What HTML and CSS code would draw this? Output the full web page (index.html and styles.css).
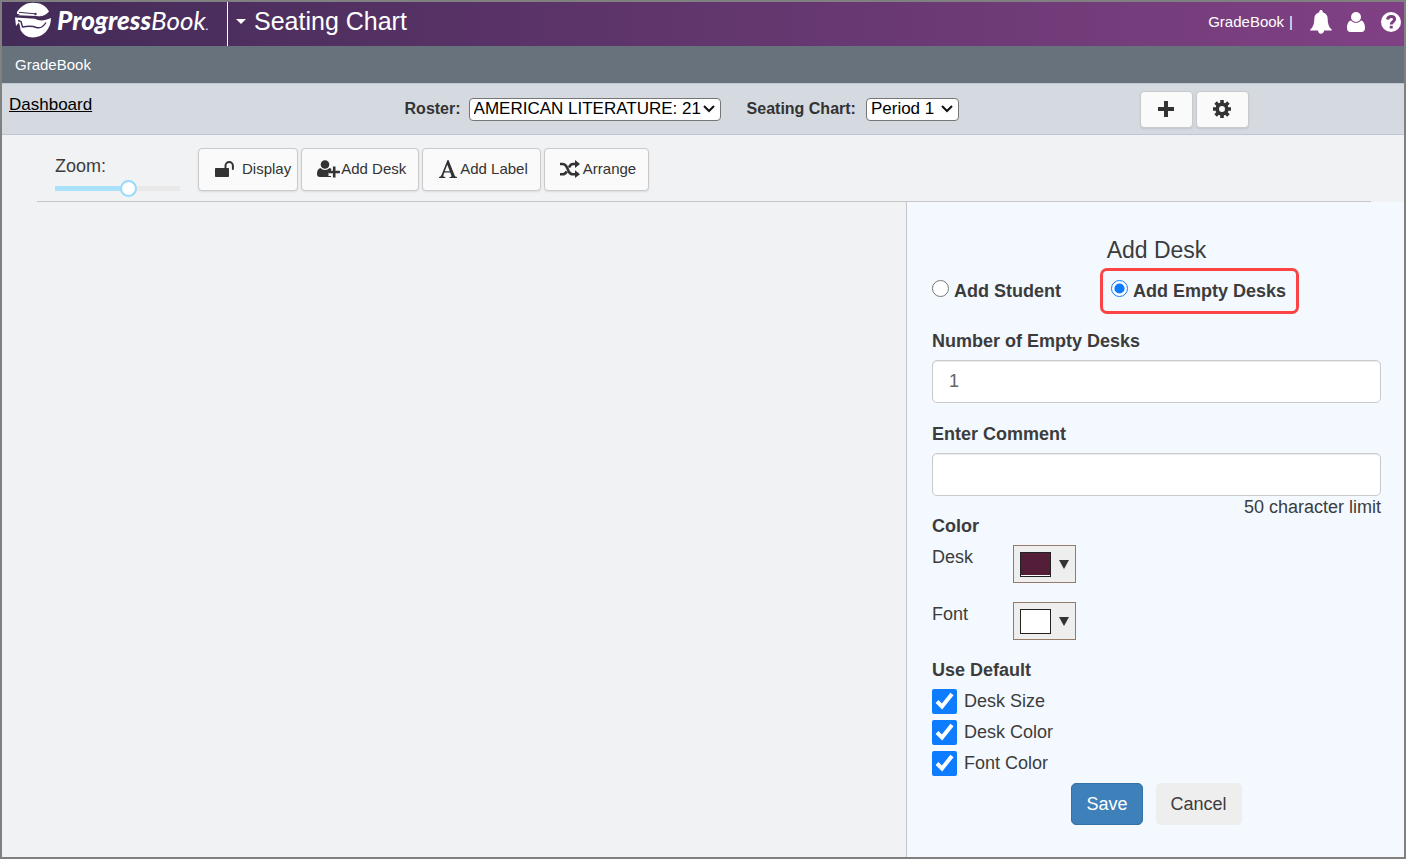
FILE: index.html
```html
<!DOCTYPE html>
<html lang="en">
<head>
<meta charset="utf-8">
<meta name="viewport" content="width=device-width, initial-scale=1">
<title>Seating Chart</title>
<link rel="stylesheet" href="styles.css">
</head>
<body>
<div class="app">
  <header class="topbar">
    <a class="brand" href="#">
      <svg class="brand-mark" viewBox="0 0 36 36" width="36" height="36" aria-hidden="true">
        <path fill="#fff" d="M2 10C6 4 11 .7 18 .7 26 .7 31 4 34 9.500c-3 4-7.500 5.500-12.500 4.500L3 13.200l2-.9-3-.3z"/>
        <path fill="none" stroke="#432b57" stroke-width="1" d="M4 10.300l16 1.500"/>
        <circle cx="20.500" cy="12" r="1.200" fill="#432b57"/>
        <path fill="#fff" d="M0 15.500l20 1.300c5 2.700 10 1.700 16-.8 0 11-8 19.500-18 19.500-6 0-10-3-12.500-7.500L5 24.500 4 20.500 1 24z"/>
        <path fill="none" stroke="#432b57" stroke-width="1.400" d="M3 18.500l3 1 1.500 5.500c5-1 9-1.500 14 .5 4 1.200 7-1 9.500-5"/>
      </svg>
      <span class="brand-name"><b>Progress</b>Book<span class="brand-dot">.</span></span>
    </a>
    <button class="page-menu" type="button"><span class="caret"></span>Seating Chart</button>
    <nav class="user-nav">
      <a class="user-link" href="#">GradeBook</a><span class="bar">|</span>
      <button class="icon-button" type="button" aria-label="Notifications">
        <svg viewBox="0 0 22 24" width="22" height="24"><path fill="#fff" d="M11 0c1 0 1.700.7 1.700 1.700v.6c3.300.8 5 3.300 5 6.700 0 5 1.300 8.300 4 10.500v1H.300v-1C3 17.300 4.300 14 4.300 9c0-3.400 1.700-5.900 5-6.700v-.6C9.300.7 10 0 11 0zM8 20.500h6c0 2-1.200 3.200-3 3.200s-3-1.200-3-3.200z"/></svg>
      </button>
      <button class="icon-button" type="button" aria-label="Account">
        <svg viewBox="0 0 18 20" width="18" height="20"><circle cx="9" cy="5" r="5" fill="#fff"/><path fill="#fff" d="M4 8.500c1.300 1.500 3 2.300 5 2.300s3.700-.8 5-2.300c2.600.6 4 3.500 4 7.500 0 2.500-1.300 4-3.500 4h-11C1.300 20 0 18.500 0 16c0-4 1.400-6.900 4-7.500z"/></svg>
      </button>
      <button class="icon-button" type="button" aria-label="Help">
        <svg viewBox="0 0 20 20" width="20" height="20"><circle cx="10" cy="10" r="10" fill="#fff"/><path fill="none" stroke="#7a3d7e" stroke-width="3" d="M6.500 7.500C7 5.300 8.500 4.500 10.200 4.500c2 0 3.400 1.100 3.400 2.800 0 2.200-3.400 2.400-3.400 5.200"/><path fill="#7a3d7e" d="M8.700 13.800h3v2.700h-3z"/></svg>
      </button>
    </nav>
  </header>

  <div class="subbar"><a href="#">GradeBook</a></div>

  <div class="filterbar">
    <a class="dashboard" href="#">Dashboard</a>
    <div class="filters">
      <label for="roster">Roster:</label>
      <span class="select-wrap">
        <select id="roster" class="roster"><option>AMERICAN LITERATURE: 21</option></select>
        <svg class="chevron" viewBox="0 0 12 8" width="12" height="8"><path fill="none" stroke="#111" stroke-width="2" d="M1 1l5 5 5-5"/></svg>
      </span>
      <label class="chart-label" for="chart">Seating Chart:</label>
      <span class="select-wrap">
        <select id="chart" class="chart"><option>Period 1</option></select>
        <svg class="chevron" viewBox="0 0 12 8" width="12" height="8"><path fill="none" stroke="#111" stroke-width="2" d="M1 1l5 5 5-5"/></svg>
      </span>
    </div>
    <div class="actions">
      <button class="button square" type="button" aria-label="Add chart">
        <svg viewBox="0 0 16 16" width="16" height="16"><path fill="none" stroke="#333" stroke-width="4" stroke-linejoin="round" d="M8 0v16M0 8h16"/></svg>
      </button>
      <button class="button square" type="button" aria-label="Settings">
        <svg viewBox="0 0 18 18" width="18" height="18"><circle cx="9" cy="9" r="4.800" fill="none" stroke="#333" stroke-width="3.600"/><path stroke="#333" stroke-width="3.600" d="M9 0v4M9 14v4M0 9h4M14 9h4M2.600 2.600l2.900 2.900M12.500 12.500l2.900 2.900M2.600 15.400l2.900-2.900M12.500 5.500l2.900-2.900"/></svg>
      </button>
    </div>
  </div>

  <div class="toolbar">
    <div class="zoom">
      <label for="zoom">Zoom:</label>
      <input id="zoom" type="range" min="0" max="100" value="60">
    </div>
    <div class="tools">
      <button class="button display" type="button">
        <svg viewBox="0 0 19 16" width="19" height="16"><path fill="#333" d="M1 7h12c.6 0 1 .4 1 1v7c0 .6-.4 1-1 1H1c-.6 0-1-.4-1-1V8c0-.6.400-1 1-1z"/><path fill="none" stroke="#333" stroke-width="2" stroke-linecap="round" d="M10.500 7.500V4.800a3.700 3.700 0 0 1 7.400 0V8"/></svg>
        Display
      </button>
      <button class="button add" type="button">
        <svg viewBox="0 0 23 18" width="23" height="18"><circle cx="8" cy="4.500" r="4.300" fill="#333"/><path fill="#333" d="M3.500 8c1.200 1.300 2.700 2 4.500 2s3.300-.7 4.500-2c1 .2 1.800.8 2.300 1.500H14v3h-2.500v3.500H14v1H3C1 17 0 16 0 14c0-3.500 1.200-5.500 3.500-6z"/><path fill="none" stroke="#333" stroke-width="2.600" d="M17.200 6.500v11M11.500 12h11.400"/></svg>
        Add Desk
      </button>
      <button class="button label" type="button">
        <svg viewBox="0 0 18 18" width="18" height="18"><path fill="#333" fill-rule="evenodd" d="M8.500 0h1l6.200 15.500c.4 1 .8 1.300 2.300 1.500v1h-7.500v-1c2-.1 2.200-.5 1.700-1.800l-1-2.700H5.400l-.7 1.900c-.7 1.800-.5 2.400 1.600 2.600v1H0v-1c1.500-.3 2-.8 2.700-2.500zM8.300 4.700l-2.500 6.500h5z"/></svg>
        Add Label
      </button>
      <button class="button" type="button">
        <svg viewBox="0 0 20 18" width="20" height="18"><path fill="none" stroke="#333" stroke-width="2.600" d="M0 4h2.500c2 0 3.200 1 4.200 3l2 4.300c1 2 2.200 3 4.300 3h3M0 14.300h2.500c2 0 3.200-1 4.200-3M9 7.500C10 5 11.200 4 13 4h3"/><path fill="#333" d="M15 0l5 4-5 4zM15 10.300l5 4-5 3.700z"/></svg>
        Arrange
      </button>
    </div>
  </div>

  <main class="workspace">
    <section class="canvas" aria-label="Seating chart"></section>
    <form class="panel">
      <h2>Add Desk</h2>
      <div class="modes">
        <label class="mode"><input type="radio" name="mode">Add Student</label>
        <label class="mode selected"><input type="radio" name="mode" checked>Add Empty Desks</label>
      </div>
      <label class="field-label" for="count">Number of Empty Desks</label>
      <input class="field" id="count" type="text" value="1">
      <label class="field-label second" for="comment">Enter Comment</label>
      <input class="field" id="comment" type="text">
      <div class="hint">50 character limit</div>
      <h3>Color</h3>
      <div class="color-row">
        <span id="desk-label">Desk</span>
        <button class="picker" type="button" aria-labelledby="desk-label"><span class="swatch plum"></span><span class="down"></span></button>
      </div>
      <div class="color-row">
        <span id="font-label">Font</span>
        <button class="picker" type="button" aria-labelledby="font-label"><span class="swatch"></span><span class="down"></span></button>
      </div>
      <h3 class="defaults">Use Default</h3>
      <label class="check"><input type="checkbox" checked>Desk Size</label>
      <label class="check"><input type="checkbox" checked>Desk Color</label>
      <label class="check"><input type="checkbox" checked>Font Color</label>
      <div class="buttons">
        <button class="save" type="submit">Save</button>
        <button class="cancel" type="button">Cancel</button>
      </div>
    </form>
  </main>
</div>
</body>
</html>
```
FILE: styles.css
```css
* { box-sizing: border-box; }
body {
  margin: 0;
  font-family: "Liberation Sans", Arial, sans-serif;
  font-size: 18px;
  color: #3c3c3c;
  background: #f1f2f4;
}
button, input, select { font: inherit; color: inherit; margin: 0; }
svg { display: block; flex: none; }
.app {
  min-height: 100vh;
  display: flex;
  flex-direction: column;
  border: 2px solid #808080;
}

/* Header */
.topbar {
  display: flex;
  height: 44px;
  color: #fff;
  background: linear-gradient(90deg, #432b57, #804184);
}
.brand {
  display: flex;
  gap: 6px;
  width: 226px;
  padding-left: 13px;
  border-right: 1px solid #fff;
  color: #fff;
  text-decoration: none;
}
.brand-name {
  font-family: Lato, sans-serif;
  font-size: 26px;
  font-style: italic;
  line-height: 36px;
}
.brand-name b { font-weight: 900; }
.brand-dot { font-size: 12px; }
.page-menu {
  display: flex;
  align-items: center;
  gap: 8px;
  padding: 0 8px 5px;
  border: 0;
  background: none;
  font-size: 25px;
}
.caret {
  border: 5px solid transparent;
  border-top-color: #fff;
  border-bottom: 0;
}
.user-nav {
  display: flex;
  align-items: center;
  margin-left: auto;
  padding: 0 3px 5px 0;
  font-size: 15px;
}
.user-link { color: #fff; text-decoration: none; }
.bar { margin: 0 2px 0 5px; }
.icon-button { padding: 0; margin-left: 15px; border: 0; background: none; }
.icon-button:last-child { margin-left: 16px; }
.subbar {
  height: 37px;
  padding-left: 13px;
  background: #67727d;
  font-size: 15px;
  line-height: 37px;
}
.subbar a { color: #fff; text-decoration: none; }

/* Roster and chart selection */
.filterbar {
  display: grid;
  grid-template-columns: 402fr 734fr 264fr;
  height: 52px;
  border-top: 1px solid #bdc8d2;
  border-bottom: 1px solid #bdc8d2;
  background: #d5dae1;
}
.dashboard { justify-self: start; padding: 11px 0 0 7px; color: #000; font-size: 17px; }
.filters {
  display: flex;
  align-items: center;
  gap: 8px;
  font-size: 16px;
  font-weight: bold;
  color: #333;
  white-space: nowrap;
}
.chart-label { margin: 0 2px 0 18px; }
.select-wrap { display: inline-grid; align-items: center; font-weight: normal; }
.select-wrap > * { grid-area: 1 / 1; }
.select-wrap select {
  appearance: none;
  height: 23px;
  padding: 0 4px;
  border: 1px solid #767676;
  border-radius: 4px;
  background: #fff;
  color: #000;
  font-size: 17px;
  line-height: 20px;
}
.roster { width: 252px; }
.chart { width: 93px; }
.chevron { justify-self: end; margin-right: 6px; pointer-events: none; }
.actions { display: flex; gap: 3px; padding-top: 7px; }
.button {
  display: flex;
  align-items: center;
  gap: 3px;
  height: 43px;
  padding: 0 12px 2px 15px;
  border: 1px solid #c9cacc;
  border-radius: 4px;
  background: #fafafa;
  box-shadow: 0 1px 2px rgba(0, 0, 0, .1);
  color: #333;
  font-size: 15px;
  white-space: nowrap;
}
.square { justify-content: center; width: 53px; height: 37px; padding: 0 0 2px; }

/* Chart tools */
.toolbar {
  display: flex;
  gap: 18px;
  height: 67px;
  margin: 0 33px 0 35px;
  padding: 13px 0 0 18px;
  border-bottom: 1px solid #c5c6c8;
}
.zoom { width: 125px; padding-top: 8px; }
.zoom label { display: block; line-height: 20px; }
.zoom input {
  appearance: none;
  display: block;
  width: 100%;
  height: 18px;
  margin-top: 3px;
  background: linear-gradient(90deg, #abe2fb 60%, #e9e9e9 60%) center / 100% 5px no-repeat;
}
.zoom input::-webkit-slider-thumb {
  appearance: none;
  width: 17px;
  height: 17px;
  border: 2px solid #96dbfa;
  border-radius: 50%;
  background: #fff;
}
.tools { display: flex; gap: 3px; }
.display { gap: 8px; padding: 0 6px 2px 16px; }
.add { gap: 1px; }
.label { padding-left: 16px; }

/* Workspace */
.workspace { flex: 1; display: grid; grid-template-columns: 904fr 498fr; }
.panel {
  padding: 36px 23px 32px 25px;
  border-left: 1px solid #c5c6c8;
  background: #f3f9fe;
}
h2, h3 { margin: 0; }
h2 { font-size: 23px; font-weight: normal; line-height: 24px; text-align: center; }
h3 { font-size: 18px; line-height: 20px; }
.modes { display: flex; gap: 24px; margin-top: 6px; }
.mode {
  display: flex;
  gap: 5px;
  padding: 12px 10px 12px 0;
  border: 0 solid transparent;
  border-width: 3px 3px 3px 0;
  font-weight: bold;
  line-height: 16px;
  white-space: nowrap;
}
.mode:first-child { padding-right: 12px; }
.mode input { width: 17px; height: 17px; margin-top: -3px; accent-color: #0d7cff; }
.mode.selected { padding-left: 8px; border: 3px solid #fc4445; border-radius: 7px; }
.field-label { display: block; margin-top: 17px; font-weight: bold; line-height: 20px; }
.field-label.second { margin-top: 21px; }
.field {
  display: block;
  width: 100%;
  height: 43px;
  margin-top: 9px;
  padding: 0 16px;
  border: 1px solid #c9cacc;
  border-radius: 5px;
  background: #fff;
  box-shadow: inset 0 1px 1px rgba(0, 0, 0, .08);
  color: #666;
}
.hint { margin: 1px 0 -1px; line-height: 20px; text-align: right; }
.color-row { display: flex; height: 38px; margin: 9px 0 19px; }
.color-row > span { width: 81px; line-height: 24px; }
.picker {
  display: flex;
  align-items: center;
  gap: 8px;
  width: 63px;
  height: 38px;
  padding: 0 6px;
  border: 1px solid #957b68;
  background: #eee;
}
.swatch { width: 31px; height: 25px; border: 1px solid #222; background: #fff; }
.plum { background: #541e38; box-shadow: inset 0 -1px #fff; }
.down { border: 5px solid transparent; border-top: 9px solid #333; border-bottom: 0; }
.defaults { margin: 20px 0 9px; }
.check { display: flex; align-items: center; gap: 7px; height: 25px; margin-bottom: 6px; }
.check input { width: 25px; height: 25px; accent-color: #0d7cff; }
.buttons { display: flex; justify-content: center; gap: 13px; margin-top: 7px; }
.buttons button { height: 42px; padding: 0 14px; border: 1px solid #eee; border-radius: 5px; }
.buttons .save { border-color: #3472a6; background: #3e80ba; color: #fff; }
.buttons .cancel { background: #eee; }
```
